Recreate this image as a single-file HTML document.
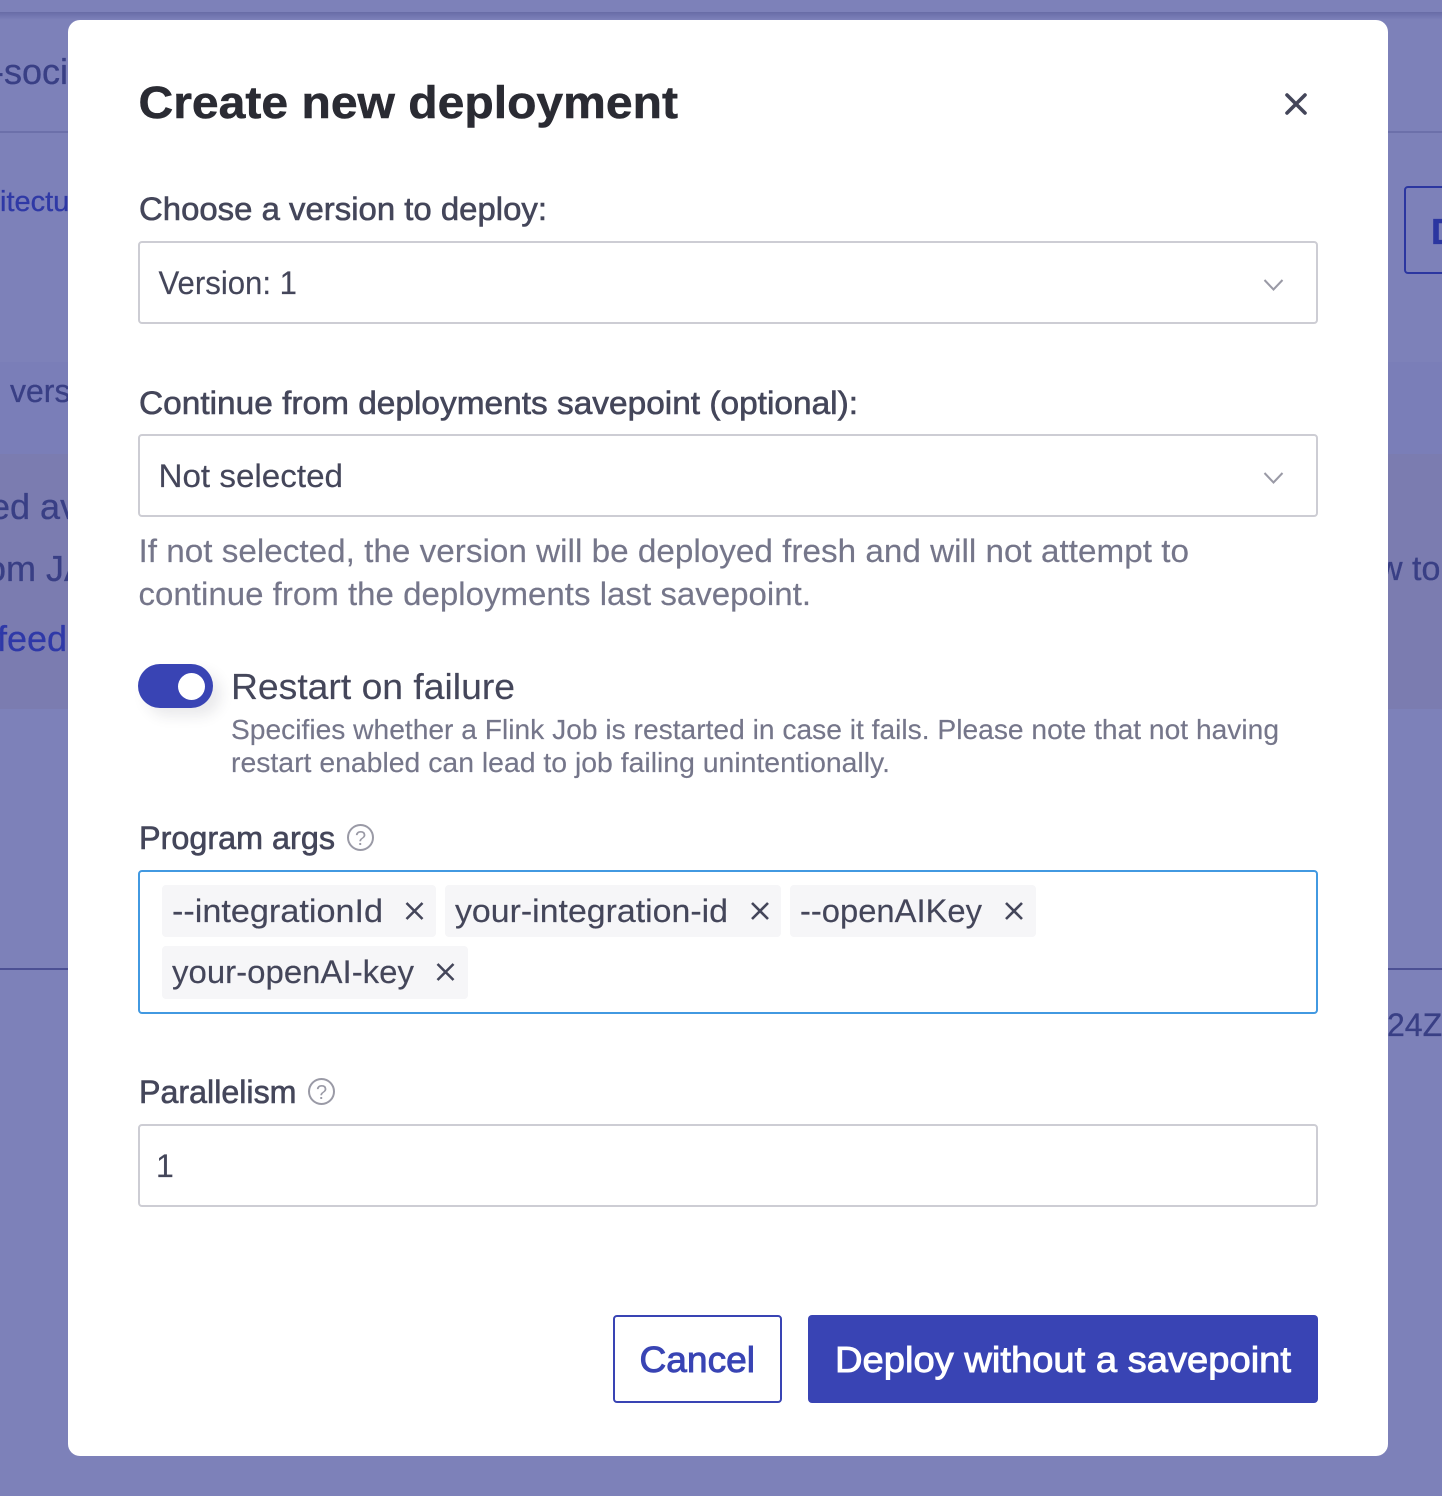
<!DOCTYPE html>
<html lang="en">
<head>
<meta charset="utf-8">
<title>Create new deployment</title>
<style>
html,body{margin:0;padding:0;width:1442px;height:1496px;overflow:hidden;background:#7d81b9}
body{position:relative;font-family:"Liberation Sans",sans-serif}
.a{position:absolute;box-sizing:border-box}
.bt{position:absolute;white-space:nowrap;line-height:1;font-size:36px;color:#393f85;-webkit-text-stroke:.3px currentColor}
.box{border:2px solid #cdcdd4;border-radius:4px;background:#fff;left:138px;width:1180px}
.tag{background:#f6f6f8;border-radius:4px}
svg{position:absolute;left:0;top:0}
text{font-family:"Liberation Sans",sans-serif}
.lbl{font-size:32px;fill:#44465a;stroke:#44465a;stroke-width:.6px}
.val{font-size:32px;fill:#44465a;stroke:#44465a;stroke-width:.15px}
.hlp{font-size:32px;fill:#75768a;stroke:#75768a;stroke-width:.15px}
.sm{font-size:28px;fill:#75768a;stroke:#75768a;stroke-width:.15px}
</style>
</head>
<body>
<div class="a" style="left:0;top:12px;width:1442px;height:8px;background:linear-gradient(#686ca6,#6d71ac 25%,#7d81b9)"></div>
<div class="a" style="left:0;top:131px;width:1442px;height:2px;background:#6c70aa"></div>
<div class="a" style="left:0;top:362px;width:1442px;height:92px;background:#7a7eb8"></div>
<div class="a" style="left:0;top:454px;width:1442px;height:255px;background:#7b7cb0"></div>
<div class="a" style="left:0;top:968px;width:1442px;height:2px;background:#4c5094"></div>
<div class="bt" style="left:-8px;top:54px">-soci</div>
<div class="bt" style="left:0;top:188px;font-size:29px;color:#2f39a6">itectu</div>
<div class="bt" style="left:10px;top:375px;font-size:32px">vers</div>
<div class="bt" style="left:-10px;top:489px">ed av</div>
<div class="bt" style="left:-14px;top:551px">om JA</div>
<div class="bt" style="left:-3px;top:621px;color:#2f39a8">feed</div>
<div class="bt" style="left:1378px;top:552px;font-size:34px">w to</div>
<div class="bt" style="left:1387px;top:1009px;font-size:32px">24Z</div>
<div class="a" style="left:1404px;top:186px;width:60px;height:88px;border:2px solid #2b36a0;border-radius:4px"></div>
<div class="bt" style="left:1431px;top:214px;font-size:36px;font-weight:bold;color:#2b36a0">D</div>

<div class="a" style="left:68px;top:20px;width:1320px;height:1436px;background:#fff;border-radius:12px"></div>
<div class="a box" style="top:241px;height:83px"></div>
<div class="a box" style="top:434px;height:83px"></div>
<div class="a box" style="top:870px;height:144px;border-color:#4299e1"></div>
<div class="a box" style="top:1124px;height:83px"></div>
<div class="a tag" style="left:162px;top:885px;width:274px;height:52px"></div>
<div class="a tag" style="left:445px;top:885px;width:336px;height:52px"></div>
<div class="a tag" style="left:790px;top:885px;width:246px;height:52px"></div>
<div class="a tag" style="left:162px;top:946px;width:306px;height:53px"></div>
<div class="a" style="left:138px;top:664px;width:75px;height:44px;border-radius:22px;background:#3944b4;box-shadow:8px 8px 14px rgba(40,40,60,.1)"></div>
<div class="a" style="left:178px;top:673px;width:27px;height:27px;border-radius:50%;background:#fff"></div>
<div class="a" style="left:613px;top:1315px;width:169px;height:88px;border:2px solid #3944b4;border-radius:4px;background:#fff"></div>
<div class="a" style="left:808px;top:1315px;width:510px;height:88px;border-radius:4px;background:#3944b4"></div>

<svg width="1442" height="1496" viewBox="0 0 1442 1496" xmlns="http://www.w3.org/2000/svg">
<text x="138.500" y="118" font-size="45" font-weight="bold" fill="#2a2b33" stroke="#2a2b33" stroke-width=".5" textLength="539.500" lengthAdjust="spacingAndGlyphs">Create new deployment</text>
<path d="M1287 95L1305 113M1305 95L1287 113" stroke="#44465a" stroke-width="3.600" fill="none" stroke-linecap="round"/>
<text class="lbl" x="139" y="220" textLength="408" lengthAdjust="spacingAndGlyphs">Choose a version to deploy:</text>
<text class="val" x="158.500" y="294" textLength="138.500" lengthAdjust="spacingAndGlyphs">Version: 1</text>
<path d="M1264.500 280L1273.500 289.500L1282.500 280" stroke="#9a9aa6" stroke-width="2" fill="none"/>
<text class="lbl" x="139" y="414" textLength="719" lengthAdjust="spacingAndGlyphs">Continue from deployments savepoint (optional):</text>
<text class="val" x="158.500" y="487" textLength="184.500" lengthAdjust="spacingAndGlyphs">Not selected</text>
<path d="M1264.500 473L1273.500 482.500L1282.500 473" stroke="#9a9aa6" stroke-width="2" fill="none"/>
<text class="hlp" x="138.500" y="562" textLength="1050.500" lengthAdjust="spacingAndGlyphs">If not selected, the version will be deployed fresh and will not attempt to</text>
<text class="hlp" x="138.500" y="605" textLength="672.500" lengthAdjust="spacingAndGlyphs">continue from the deployments last savepoint.</text>
<text x="231" y="699" font-size="36" fill="#44465a" stroke="#44465a" stroke-width=".15" textLength="284" lengthAdjust="spacingAndGlyphs">Restart on failure</text>
<text class="sm" x="231" y="739" textLength="1048" lengthAdjust="spacingAndGlyphs">Specifies whether a Flink Job is restarted in case it fails. Please note that not having</text>
<text class="sm" x="231" y="772" textLength="659" lengthAdjust="spacingAndGlyphs">restart enabled can lead to job failing unintentionally.</text>
<text class="lbl" x="139" y="849" textLength="196" lengthAdjust="spacingAndGlyphs">Program args</text>
<circle cx="360.500" cy="837.500" r="12.500" fill="none" stroke="#9a9aa6" stroke-width="2"/>
<text x="360.500" y="845" font-size="20" fill="#9a9aa6" text-anchor="middle">?</text>
<text class="val" x="172" y="922" textLength="211" lengthAdjust="spacingAndGlyphs">--integrationId</text>
<text class="val" x="455" y="922" textLength="273" lengthAdjust="spacingAndGlyphs">your-integration-id</text>
<text class="val" x="800" y="922" textLength="182" lengthAdjust="spacingAndGlyphs">--openAIKey</text>
<text class="val" x="172" y="983" textLength="242" lengthAdjust="spacingAndGlyphs">your-openAI-key</text>
<g stroke="#44465a" stroke-width="2.600" fill="none">
<path d="M406.500 903L422.500 919M422.500 903L406.500 919"/>
<path d="M752 903L768 919M768 903L752 919"/>
<path d="M1006 903L1022 919M1022 903L1006 919"/>
<path d="M437.500 964L453.500 980M453.500 964L437.500 980"/>
</g>
<text class="lbl" x="139" y="1103" textLength="157.500" lengthAdjust="spacingAndGlyphs">Parallelism</text>
<circle cx="321.500" cy="1091.500" r="12.500" fill="none" stroke="#9a9aa6" stroke-width="2"/>
<text x="321.500" y="1099" font-size="20" fill="#9a9aa6" text-anchor="middle">?</text>
<text class="val" x="156" y="1177" textLength="14">1</text>
<text x="639.500" y="1372" font-size="36" fill="#3944b4" stroke="#3944b4" stroke-width=".9" textLength="115.500" lengthAdjust="spacingAndGlyphs">Cancel</text>
<text x="835" y="1372" font-size="36" fill="#fff" stroke="#fff" stroke-width=".9" textLength="456" lengthAdjust="spacingAndGlyphs">Deploy without a savepoint</text>
</svg>
</body>
</html>
